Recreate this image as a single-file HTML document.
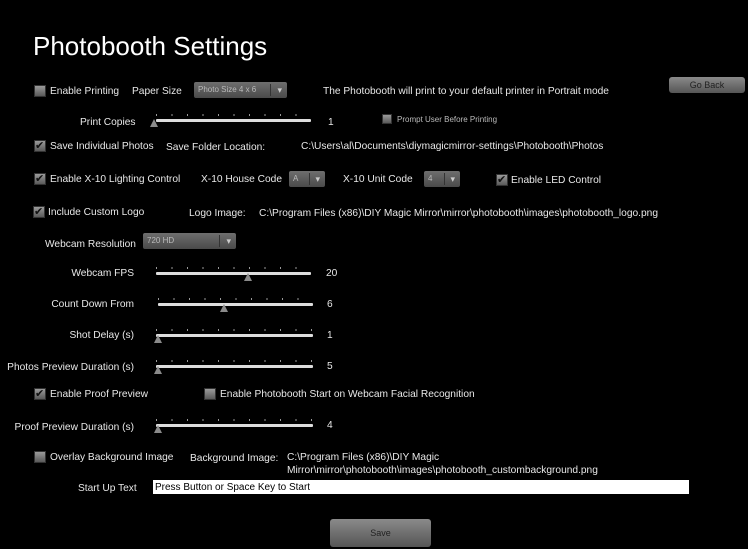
<!DOCTYPE html>
<html><head><meta charset="utf-8"><style>
body{margin:0;width:748px;height:549px;background:#000;overflow:hidden;font-family:"Liberation Sans",sans-serif;color:#e8e8e8;position:relative}
.t{position:absolute;font-size:10.2px;white-space:nowrap;line-height:12px;margin-top:1px}
.cb{position:absolute;width:10px;height:10px;background:linear-gradient(#9a9a9a,#5a5a5a);border:1px solid #333}
.cb.on::after{content:"✔";position:absolute;left:0px;top:-2px;font-size:11px;color:#111}
.dd{position:absolute;height:16px;background:linear-gradient(#6e6e6e,#4a4a4a);border-radius:2px;font-size:8px;color:#bbb;line-height:16px;padding-left:4px;box-sizing:border-box}
.dd::after{content:"▾";position:absolute;right:5px;top:0;color:#ccc;font-size:9px}
.dd i{position:absolute;right:16px;top:2px;width:1px;height:12px;background:#333}
.sl{position:absolute;height:3px;background:#ddd;border-radius:1px}
.sl::before{content:"";position:absolute;left:0;right:0;top:-5px;height:2px;background:repeating-linear-gradient(90deg,#999 0 1px,transparent 1px 15.5px)}
.th{position:absolute;width:0;height:0;border-left:4px solid transparent;border-right:4px solid transparent;border-bottom:8px solid #8a8a8a}
.btn{position:absolute;background:linear-gradient(#8a8a8a,#555);border-radius:3px;font-size:9px;color:#222;text-align:center}
</style></head><body>
<div class="t" style="left:33px;top:30px;font-size:26px;line-height:30px;color:#fff">Photobooth Settings</div>

<div class="cb" style="left:34px;top:85px"></div>
<div class="t" style="left:50px;top:85px">Enable Printing</div>
<div class="t" style="left:132px;top:85px">Paper Size</div>
<div class="dd" style="left:194px;top:82px;width:93px">Photo Size 4 x 6<i></i></div>
<div class="t" style="left:323px;top:85px">The Photobooth will print to your default printer in Portrait mode</div>
<div class="btn" style="left:669px;top:77px;width:76px;height:16px;line-height:16px">Go Back</div>

<div class="t" style="left:80px;top:116px">Print Copies</div>
<div class="sl" style="left:156px;top:119px;width:155px"></div>
<div class="th" style="left:150px;top:119px"></div>
<div class="t" style="left:328px;top:116px">1</div>
<div class="cb" style="left:382px;top:114px;width:8px;height:8px"></div>
<div class="t" style="left:397px;top:113px;font-size:8px;color:#bbb">Prompt User Before Printing</div>

<div class="cb on" style="left:34px;top:140px"></div>
<div class="t" style="left:50px;top:140px">Save Individual Photos</div>
<div class="t" style="left:166px;top:141px">Save Folder Location:</div>
<div class="t" style="left:301px;top:140px">C:\Users\al\Documents\diymagicmirror-settings\Photobooth\Photos</div>

<div class="cb on" style="left:34px;top:173px"></div>
<div class="t" style="left:50px;top:173px">Enable X-10 Lighting Control</div>
<div class="t" style="left:201px;top:173px">X-10 House Code</div>
<div class="dd" style="left:289px;top:171px;width:36px">A<i style="right:15px"></i></div>
<div class="t" style="left:343px;top:173px">X-10 Unit Code</div>
<div class="dd" style="left:424px;top:171px;width:36px">4<i style="right:15px"></i></div>
<div class="cb on" style="left:496px;top:174px"></div>
<div class="t" style="left:511px;top:174px">Enable LED Control</div>

<div class="cb on" style="left:33px;top:206px"></div>
<div class="t" style="left:48px;top:206px">Include Custom Logo</div>
<div class="t" style="left:189px;top:207px">Logo Image:</div>
<div class="t" style="left:259px;top:207px">C:\Program Files (x86)\DIY Magic Mirror\mirror\photobooth\images\photobooth_logo.png</div>

<div class="t" style="left:45px;top:238px">Webcam Resolution</div>
<div class="dd" style="left:143px;top:233px;width:93px">720 HD<i></i></div>

<div class="t" style="left:0;width:134px;text-align:right;top:267px">Webcam FPS</div>
<div class="sl" style="left:156px;top:272px;width:155px"></div>
<div class="th" style="left:244px;top:273px"></div>
<div class="t" style="left:326px;top:267px">20</div>

<div class="t" style="left:0;width:134px;text-align:right;top:298px">Count Down From</div>
<div class="sl" style="left:158px;top:303px;width:155px"></div>
<div class="th" style="left:220px;top:304px"></div>
<div class="t" style="left:327px;top:298px">6</div>

<div class="t" style="left:0;width:134px;text-align:right;top:329px">Shot Delay (s)</div>
<div class="sl" style="left:156px;top:334px;width:157px"></div>
<div class="th" style="left:154px;top:335px"></div>
<div class="t" style="left:327px;top:329px">1</div>

<div class="t" style="left:0;width:134px;text-align:right;top:361px">Photos Preview Duration (s)</div>
<div class="sl" style="left:156px;top:365px;width:157px"></div>
<div class="th" style="left:154px;top:366px"></div>
<div class="t" style="left:327px;top:360px">5</div>

<div class="cb on" style="left:34px;top:388px"></div>
<div class="t" style="left:50px;top:388px">Enable Proof Preview</div>
<div class="cb" style="left:204px;top:388px"></div>
<div class="t" style="left:220px;top:388px">Enable Photobooth Start on Webcam Facial Recognition</div>

<div class="t" style="left:0;width:134px;text-align:right;top:421px">Proof Preview Duration (s)</div>
<div class="sl" style="left:156px;top:424px;width:157px"></div>
<div class="th" style="left:154px;top:425px"></div>
<div class="t" style="left:327px;top:419px">4</div>

<div class="cb" style="left:34px;top:451px"></div>
<div class="t" style="left:50px;top:451px">Overlay Background Image</div>
<div class="t" style="left:190px;top:452px">Background Image:</div>
<div class="t" style="left:287px;top:451px">C:\Program Files (x86)\DIY Magic</div>
<div class="t" style="left:287px;top:464px">Mirror\mirror\photobooth\images\photobooth_custombackground.png</div>

<div class="t" style="left:78px;top:482px">Start Up Text</div>
<div style="position:absolute;left:153px;top:480px;width:536px;height:14px;background:#fff;color:#000;font-size:10px;line-height:15px;padding-left:2px;box-sizing:border-box">Press Button or Space Key to Start</div>

<div class="btn" style="left:330px;top:519px;width:101px;height:28px;line-height:28px">Save</div>
</body></html>
